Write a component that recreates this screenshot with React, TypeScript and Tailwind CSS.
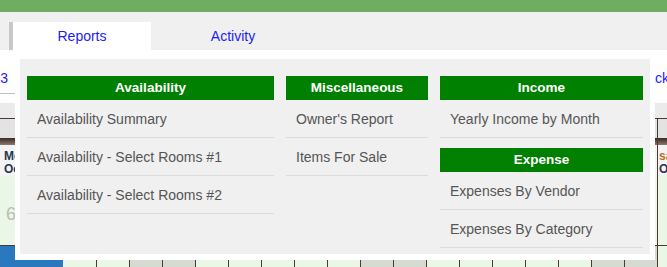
const reportGroups = {
  availability: ["Availability Summary", "Availability - Select Rooms #1", "Availability - Select Rooms #2"],
  misc: ["Owner's Report", "Items For Sale"],
  income: ["Yearly Income by Month"],
  expense: ["Expenses By Vendor", "Expenses By Category"],
}

const weekendCells = [2, 3, 9, 10, 16, 17]

function GroupHeader({ title, className = "" }: { title: string; className?: string }) {
  return (
    <div className={`h-[24px] bg-[#008000] text-white font-bold text-[13.5px] flex items-center justify-center ${className}`}>
      {title}
    </div>
  )
}

function MenuItem({ label }: { label: string }) {
  return (
    <a className="h-[38px] border-b border-[#dcdcdc] pl-[10px] pt-[1px] flex items-center text-[14px] text-[#555] cursor-pointer hover:text-black">
      {label}
    </a>
  )
}

function ReportsMenu() {
  return (
    <div className="absolute left-[15px] top-[50px] w-[640px] bg-white pt-[9px] px-[5px] pb-[6px]">
      <div className="bg-[#f0f0f0] pt-[17px] pb-[6px] px-[7px] flex items-start gap-[12px]">
        <div className="w-[247px] flex flex-col">
          <GroupHeader title="Availability" />
          {reportGroups.availability.map((r) => (
            <MenuItem key={r} label={r} />
          ))}
        </div>
        <div className="w-[142px] flex flex-col">
          <GroupHeader title="Miscellaneous" />
          {reportGroups.misc.map((r) => (
            <MenuItem key={r} label={r} />
          ))}
        </div>
        <div className="w-[203px] flex flex-col">
          <GroupHeader title="Income" />
          {reportGroups.income.map((r) => (
            <MenuItem key={r} label={r} />
          ))}
          <GroupHeader title="Expense" className="mt-[10px]" />
          {reportGroups.expense.map((r) => (
            <MenuItem key={r} label={r} />
          ))}
        </div>
      </div>
    </div>
  )
}

export default function App() {
  return (
    <div className="relative w-[667px] h-[267px] overflow-hidden bg-white font-['Liberation_Sans',Arial,sans-serif]">
      <div className="h-[12px] bg-[#6fad62]" />

      {/* tabs */}
      <div className="h-[38px] bg-[#f0f0f0] pt-[10px] flex">
        <div className="ml-[9px] w-[4px] bg-[#c8c8c8]" />
        <div className="w-[138px] bg-white flex items-center justify-center text-[14px] text-[#1c1cf5]">Reports</div>
        <div className="w-[164px] flex items-center justify-center text-[14px] text-[#1c1cf5]">Activity</div>
      </div>

      {/* page links */}
      <div className="h-[53px] flex justify-between items-start">
        <div className="mt-[20px] h-[24px] w-[200px] border-b border-[#bdbdbd] text-[14px] leading-[16px] text-[#1c1cf5] -ml-[23px]">2023</div>
        <div className="mt-[20px] text-[14px] leading-[16px] text-[#1c1cf5] -mr-[2px]">Back</div>
      </div>

      {/* calendar */}
      <div className="h-[15px] bg-[#ebebeb]" />
      <div className="flex">
        <div className="w-[657px] flex flex-col">
          <div className="h-[20px] border-t border-[#4a3b32] bg-[#e3e3e3]" />
          <div className="h-[7px] bg-gradient-to-b from-[#3a2a20] to-[#8c7b70]" />
          <div className="h-[30px] bg-[#f4f4f4] pl-[4px] pt-[5px] text-[12px] font-bold leading-[13px] text-[#2b3552]">
            <div>Mon</div>
            <div>Oct</div>
          </div>
          <div className="h-[70px] bg-[#eaf6e6] pl-[6px] pt-[30px] text-[18px] leading-[18px] text-[#b9bdb4]">60</div>
          <div className="h-[22px] border-t border-[#4a3b32] flex">
            <div className="w-[63px] bg-[#2a78bd]" />
            {Array.from({ length: 18 }, (_, i) => (
              <div
                key={i}
                className={`w-[33px] ${i > 0 ? "border-l border-[#4a3b32]" : ""} ${weekendCells.includes(i) ? "bg-[#d5dbd3]" : "bg-[#eaf6e6]"}`}
              />
            ))}
          </div>
        </div>
        <div className="flex-1 flex flex-col border-l border-[#4a3b32]">
          <div className="h-[20px] border-t border-[#4a3b32] bg-[#e3e3e3]" />
          <div className="h-[7px] bg-gradient-to-b from-[#3a2a20] to-[#8c7b70]" />
          <div className="h-[30px] bg-[#f4f4f4] pl-[1px] pt-[5px] text-[12px] font-bold leading-[13px]">
            <div className="text-[#b0702a]">sat</div>
            <div className="text-[#2b3552]">Oct</div>
          </div>
          <div className="h-[70px] bg-[#eaf6e6]" />
          <div className="h-[22px] border-t border-[#4a3b32] bg-[#eaf6e6]" />
        </div>
      </div>

      <ReportsMenu />
    </div>
  )
}
